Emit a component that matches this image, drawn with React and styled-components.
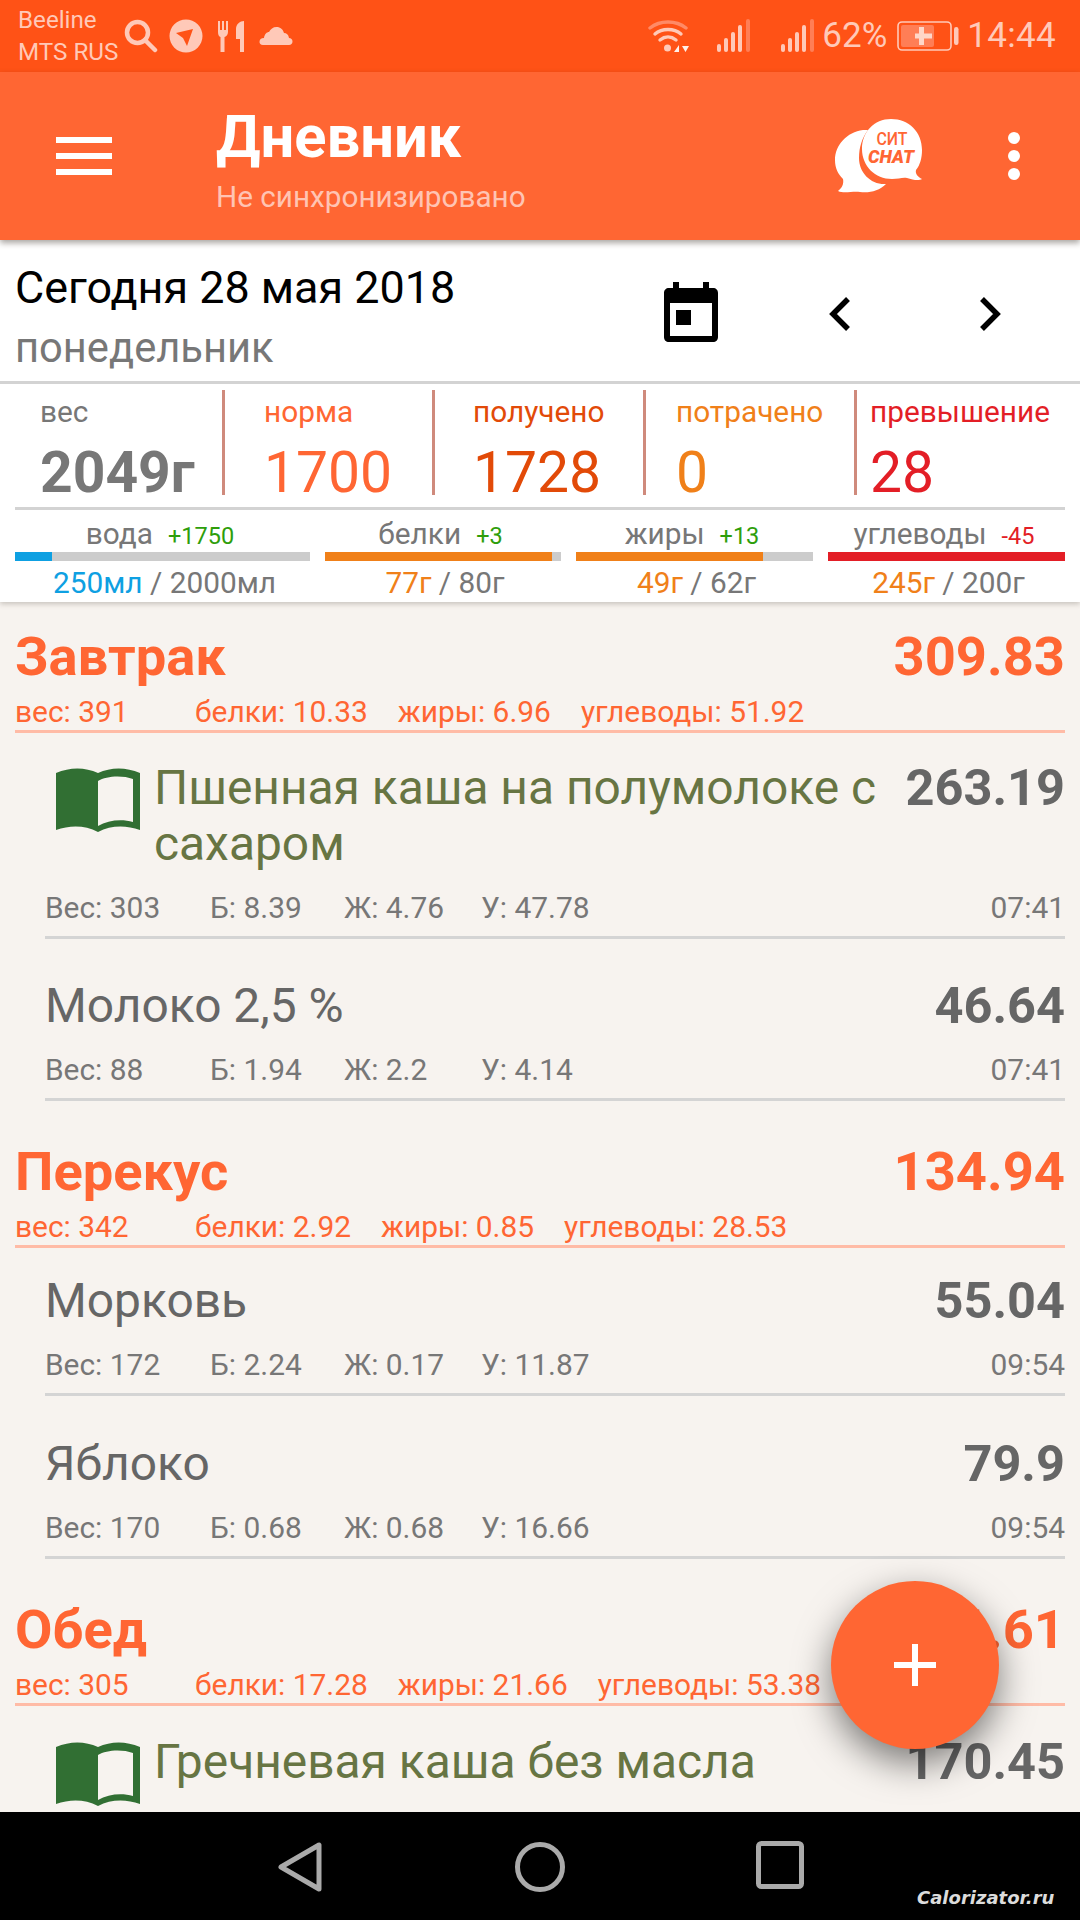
import React from "react";
import styled, { createGlobalStyle } from "styled-components";

const Global = createGlobalStyle`
  html, body { margin: 0; padding: 0; background: #000; }
  * { box-sizing: border-box; }
`;

const Screen = styled.div`
  position: relative;
  width: 1080px;
  height: 1920px;
  overflow: hidden;
  display: flex;
  flex-direction: column;
  background: #f7f3ef;
  font-family: Roboto, "Noto Sans", sans-serif;
`;

/* Status bar */
const StatusBar = styled.div`
  flex: none;
  height: 72px;
  background: #ff5216;
  color: #ffc9b8;
  display: flex;
  align-items: center;
  justify-content: space-between;
  padding: 0 24px 0 18px;
`;
const StatusGroup = styled.div`
  display: flex;
  align-items: center;
`;
const Carrier = styled.div`
  width: 106px;
  font-size: 24.2px;
  line-height: 32px;
  white-space: nowrap;
`;
const StatusIcon = styled.svg`
  display: block;
  flex: none;
  margin-left: ${(p) => p.$gap ?? 0}px;
`;
const BatteryText = styled.span`
  margin-left: 6px;
  font-size: 35px;
  line-height: 40px;
`;
const Clock = styled.span`
  margin-left: 8px;
  font-size: 35px;
  line-height: 44px;
  letter-spacing: 0.3px;
`;

/* App bar */
const AppBar = styled.header`
  position: relative;
  z-index: 3;
  flex: none;
  height: 168px;
  background: #ff6633;
  box-shadow: 0 3px 6px rgba(40, 30, 20, 0.4);
  display: flex;
  align-items: center;
  padding: 0 60px 0 56px;
`;
const Burger = styled.div`
  width: 56px;
  display: flex;
  flex-direction: column;
  gap: 10px;
`;
const BurgerLine = styled.span`
  display: block;
  height: 6px;
  background: #fff;
`;
const TitleBlock = styled.div`
  flex: 1;
  margin-left: 104px;
  padding-top: 8px;
`;
const Title = styled.div`
  color: #fff;
  font-size: 59.7px;
  font-weight: 700;
  line-height: 68px;
`;
const Subtitle = styled.div`
  color: #ffc4b3;
  font-size: 29.7px;
  line-height: 40px;
  margin-top: 6px;
`;
const Dots = styled.div`
  margin-left: 85px;
  display: flex;
  flex-direction: column;
  gap: 6px;
`;
const Dot = styled.span`
  width: 12px;
  height: 12px;
  border-radius: 50%;
  background: #fff;
`;

/* Date and daily summary */
const Summary = styled.section`
  position: relative;
  z-index: 2;
  flex: none;
  height: 362px;
  background: #fff;
  box-shadow: 0 2px 5px rgba(60, 50, 40, 0.25);
`;
const DateRow = styled.div`
  height: 144px;
  padding: 22px 0 0 15px;
  border-bottom: 3px solid #d3d3d3;
  display: flex;
`;
const DateText = styled.div`
  width: 649px;
`;
const DateLine = styled.div`
  color: #000;
  font-size: 44.9px;
  line-height: 52px;
`;
const Weekday = styled.div`
  color: #777;
  font-size: 41.7px;
  line-height: 48px;
  margin-top: 10px;
`;
const DateIcon = styled.svg`
  display: block;
  flex: none;
  margin: ${(p) => p.$top}px 0 0 ${(p) => p.$left}px;
`;
const Totals = styled.div`
  margin: 5px 15px 0;
  height: 121px;
  border-bottom: 3px solid #d3d3d3;
  display: grid;
  grid-template-columns: 207px 210px 211px 211px 1fr;
`;
const Total = styled.div`
  height: 105px;
  padding-left: ${(p) => p.$inset}px;
  margin-top: 1px;
  border-left: ${(p) => (p.$first ? "none" : "3px solid #cf8a7c")};
  color: ${(p) => p.$color};
  white-space: nowrap;
`;
const TotalLabel = styled.div`
  font-size: 29.8px;
  line-height: 34px;
  margin-top: 5px;
`;
const TotalValue = styled.div`
  font-size: 57px;
  line-height: 60px;
  font-weight: ${(p) => (p.$bold ? 700 : 400)};
  margin-top: 14px;
`;
const Macros = styled.div`
  margin: 0 15px;
  display: grid;
  grid-template-columns: 295px 236px 237px 237px;
  column-gap: 15px;
`;
const Macro = styled.div`
  text-align: center;
  white-space: nowrap;
`;
const MacroHead = styled.div`
  height: 42px;
  padding: 6px 5px 0 0;
  color: #777;
  font-size: 29.8px;
  line-height: 36px;
`;
const Delta = styled.span`
  margin-left: 15px;
  font-size: 23.5px;
  color: ${(p) => p.$color};
`;
const Track = styled.div`
  height: 9px;
  background: #cccccc;
`;
const Fill = styled.div`
  height: 100%;
  background: ${(p) => p.$color};
`;
const MacroAmount = styled.div`
  padding-left: 4px;
  color: #777;
  font-size: 29.8px;
  line-height: 36px;
  margin-top: 4px;
`;
const Eaten = styled.span`
  color: ${(p) => p.$color};
`;

/* Diary list */
const Diary = styled.main`
  flex: 1;
  min-height: 0;
  overflow: hidden;
`;
const MealHead = styled.div`
  margin: 0 15px;
  padding-top: ${(p) => p.$top}px;
  border-bottom: 3px solid #ffbba6;
  color: #ff6633;
`;
const MealTop = styled.div`
  display: flex;
  justify-content: space-between;
  font-size: 54.3px;
  font-weight: 700;
  line-height: 62px;
`;
const MealStats = styled.div`
  display: flex;
  gap: 30px;
  font-size: 29.9px;
  line-height: 34px;
  height: 35px;
  margin-top: 7px;
  white-space: nowrap;
`;
const MealWeight = styled.span`
  width: 150px;
`;
const Food = styled.div`
  margin: 0 15px 0 45px;
  padding-top: ${(p) => p.$top}px;
  border-bottom: ${(p) => (p.$open ? "none" : "3px solid #d4d4d4")};
`;
const FoodTop = styled.div`
  display: flex;
  align-items: flex-start;
  justify-content: space-between;
`;
const FoodName = styled.div`
  display: flex;
  align-items: flex-start;
`;
const FoodTitle = styled.div`
  font-size: 47.9px;
  line-height: 56px;
  color: ${(p) => (p.$recipe ? "#677543" : "#666")};
  white-space: nowrap;
`;
const Book = styled.svg`
  flex: none;
  display: block;
  margin: 8px 14px 0 11px;
`;
const FoodValue = styled.div`
  font-size: 50.5px;
  font-weight: 700;
  line-height: 55px;
  color: #666;
`;
const FoodStats = styled.div`
  display: grid;
  grid-template-columns: 165px 134px 137px 1fr auto;
  height: 45px;
  margin-top: 19px;
  color: #777;
  font-size: 29.9px;
  line-height: 34px;
`;

/* Add button */
const Fab = styled.div`
  position: absolute;
  left: 831px;
  top: 1581px;
  width: 168px;
  height: 168px;
  border-radius: 50%;
  background: #ff6633;
  box-shadow: 0 14px 36px rgba(0, 0, 0, 0.5);
  display: flex;
  align-items: center;
  justify-content: center;
  z-index: 5;
`;

/* Navigation bar */
const NavBar = styled.nav`
  position: relative;
  z-index: 6;
  flex: none;
  height: 108px;
  background: #000;
  display: flex;
  align-items: flex-start;
  padding: 29px 0 0 277px;
`;
const NavIcon = styled.svg`
  display: block;
  flex: none;
  margin-left: ${(p) => p.$gap ?? 0}px;
`;
const Watermark = styled.div`
  position: absolute;
  left: 917px;
  top: 75px;
  color: #dcdcdc;
  font-family: "DejaVu Sans", sans-serif;
  font-size: 18px;
  font-weight: 700;
  font-style: italic;
  line-height: 22px;
  white-space: nowrap;
`;

const SignalIcon = ({ gap }) => (
  <StatusIcon $gap={gap} width="36" height="36" viewBox="0 0 36 36">
    <g fill="currentColor">
      <rect x="1" y="26" width="4" height="8" rx="2" />
      <rect x="8" y="20" width="4" height="14" rx="2" />
      <rect x="15" y="14" width="4" height="20" rx="2" />
      <rect x="22" y="7" width="4" height="27" rx="2" />
    </g>
    <rect x="30" y="1" width="4" height="33" rx="2" fill="#ff7e56" />
  </StatusIcon>
);

const BookIcon = () => (
  <Book width="84" height="66" viewBox="0 0 84 66">
    <path
      fill="#316f33"
      fillRule="evenodd"
      d="M0 5C14 -1 29 -1 42 5C55 -1 70 -1 84 5V62C70 57 55 57 42 64C29 57 14 57 0 62ZM42 13V58C52 52 66 51 77 54V11C66 7 50 8 42 13Z"
    />
  </Book>
);

const Meal = ({ top, name, total, weight, protein, fat, carbs }) => (
  <MealHead $top={top}>
    <MealTop>
      <span>{name}</span>
      <span>{total}</span>
    </MealTop>
    <MealStats>
      <MealWeight>вес: {weight}</MealWeight>
      <span>белки: {protein}</span>
      <span>жиры: {fat}</span>
      <span>углеводы: {carbs}</span>
    </MealStats>
  </MealHead>
);

const FoodRow = ({ top, recipe, name, value, stats }) => (
  <Food $top={top} $open={!stats}>
    <FoodTop>
      <FoodName>
        {recipe && <BookIcon />}
        <FoodTitle $recipe={recipe}>{name}</FoodTitle>
      </FoodName>
      <FoodValue>{value}</FoodValue>
    </FoodTop>
    {stats && (
      <FoodStats>
        <span>Вес: {stats.weight}</span>
        <span>Б: {stats.b}</span>
        <span>Ж: {stats.f}</span>
        <span>У: {stats.c}</span>
        <span>{stats.time}</span>
      </FoodStats>
    )}
  </Food>
);

const totals = [
  { label: "вес", value: "2049г", color: "#777", inset: 25, bold: true, first: true },
  { label: "норма", value: "1700", color: "#ff6633", inset: 39 },
  { label: "получено", value: "1728", color: "#e24a08", inset: 38 },
  { label: "потрачено", value: "0", color: "#f08019", inset: 30 },
  { label: "превышение", value: "28", color: "#e31e26", inset: 13 },
];

const macros = [
  { name: "вода", delta: "+1750", deltaColor: "#2e9e0b", pct: 12.5, bar: "#0ea0e2", eaten: "250мл", eatenColor: "#0ea0e2", goal: "2000мл" },
  { name: "белки", delta: "+3", deltaColor: "#2e9e0b", pct: 96, bar: "#f08019", eaten: "77г", eatenColor: "#f08019", goal: "80г" },
  { name: "жиры", delta: "+13", deltaColor: "#2e9e0b", pct: 79, bar: "#f08019", eaten: "49г", eatenColor: "#f08019", goal: "62г" },
  { name: "углеводы", delta: "-45", deltaColor: "#e31e26", pct: 100, bar: "#e31e26", eaten: "245г", eatenColor: "#f08019", goal: "200г" },
];

export default function App() {
  return (
    <Screen>
      <Global />
      <StatusBar>
        <StatusGroup>
          <Carrier>
            Beeline
            <br />
            MTS RUS
          </Carrier>
          <StatusIcon width="34" height="34" viewBox="0 0 34 34">
            <circle cx="13.5" cy="13.5" r="10.5" fill="none" stroke="currentColor" strokeWidth="4.5" />
            <path d="M21 21L31 31" stroke="currentColor" strokeWidth="4.5" strokeLinecap="round" />
          </StatusIcon>
          <StatusIcon $gap={11} width="34" height="34" viewBox="0 0 34 34">
            <path
              fill="currentColor"
              fillRule="evenodd"
              d="M17 0.5A16.5 16.5 0 1 1 17 33.5A16.5 16.5 0 1 1 17 0.5ZM7 14L24 10L18 27L14 19Z"
            />
          </StatusIcon>
          <StatusIcon $gap={14} width="28" height="32" viewBox="0 0 28 32">
            <path
              fill="currentColor"
              d="M1 1H3V10H5V1H7V10H9V1H11V12C11 15 9 16.5 7.5 17V32H3.5V17C2 16.5 1 15 1 12ZM27 1V32H23V19H19V9C19 4 23 1 27 1Z"
            />
          </StatusIcon>
          <StatusIcon $gap={14} width="34" height="20" viewBox="0 0 34 20">
            <path
              fill="currentColor"
              d="M4 19C1.5 19 0.5 17.5 0.5 16C0.5 13.5 2 12 5 12C5.5 8 8 6 10 6C11.5 3 14 1 17.5 1C21.5 1 24 3.5 25 7C27.5 7 29.5 8.5 30 12C32 12 33.5 13.5 33.5 15.5C33.5 17.5 32 19 30 19Z"
            />
          </StatusIcon>
        </StatusGroup>
        <StatusGroup>
          <StatusIcon width="42" height="34" viewBox="0 0 42 34">
            <g fill="none" strokeLinecap="round" strokeWidth="3.4">
              <path stroke="#ff8a66" d="M2 9C12 1 28 1 38 9" />
              <path stroke="currentColor" d="M7 15C14 9 26 9 33 15" />
              <path stroke="currentColor" d="M12 21C17 17 23 17 28 21" />
            </g>
            <circle cx="19.5" cy="29" r="3.5" fill="currentColor" />
            <path fill="#fff0ea" d="M26 33L31 26V33ZM34 27H41L37.5 33Z" />
          </StatusIcon>
          <SignalIcon gap={26} />
          <SignalIcon gap={28} />
          <BatteryText>62%</BatteryText>
          <StatusIcon $gap={10} width="62" height="30" viewBox="0 0 62 30">
            <rect x="1" y="1" width="53" height="28" rx="4" fill="none" stroke="currentColor" strokeWidth="1.6" />
            <rect x="4" y="4" width="33" height="22" rx="2" fill="#ff7e56" />
            <path fill="#ffd6c8" d="M22 6H27V12.5H35V17.5H27V24H22V17.5H18V12.5H22Z" />
            <rect x="57" y="6" width="4.5" height="18" rx="2.2" fill="currentColor" />
          </StatusIcon>
          <Clock>14:44</Clock>
        </StatusGroup>
      </StatusBar>

      <AppBar>
        <Burger>
          <BurgerLine />
          <BurgerLine />
          <BurgerLine />
        </Burger>
        <TitleBlock>
          <Title>Дневник</Title>
          <Subtitle>Не синхронизировано</Subtitle>
        </TitleBlock>
        <svg width="88" height="76" viewBox="0 0 88 76">
          <path
            fill="#fff"
            d="M28 12C12 14 0 27 0 42C0 50 3 56 8 61C9 66 7 70 3 73C9 76 17 73 25 74C35 75 44 73 51 66C36 67 24 55 24 40C24 29 27 20 33 12Z"
          />
          <path
            fill="#fff"
            d="M56 1C39 1 27 14 27 31C27 48 40 61 57 61C63 61 68 59 72 60C78 62 84 63 87 61C83 59 80 56 81 52C85 47 87 40 87 32C87 14 74 1 56 1Z"
          />
          <text x="57" y="27" textAnchor="middle" fontFamily="Roboto, sans-serif" fontSize="18.5" fontWeight="500" fill="#ff6633" textLength="31" lengthAdjust="spacingAndGlyphs">СИТ</text>
          <text x="56" y="45" textAnchor="middle" fontFamily="Roboto, sans-serif" fontSize="18.5" fontWeight="900" fontStyle="italic" fill="#ff6633" textLength="46" lengthAdjust="spacingAndGlyphs">CHAT</text>
        </svg>
        <Dots>
          <Dot />
          <Dot />
          <Dot />
        </Dots>
      </AppBar>

      <Summary>
        <DateRow>
          <DateText>
            <DateLine>Сегодня 28 мая 2018</DateLine>
            <Weekday>понедельник</Weekday>
          </DateText>
          <DateIcon $top={20} $left={0} width="54" height="60" viewBox="0 0 54 60">
            <path
              fillRule="evenodd"
              d="M9 0H15V6H39V0H45V6H49C52 6 54 8 54 11V55C54 58 52 60 49 60H5C2 60 0 58 0 55V11C0 8 2 6 5 6H9ZM6 21V54H48V21ZM12 28H27V43H12Z"
            />
          </DateIcon>
          <DateIcon $top={34} $left={111} width="22" height="36" viewBox="0 0 22 36">
            <path d="M19 3L4 18L19 33" fill="none" stroke="#000" strokeWidth="5.5" />
          </DateIcon>
          <DateIcon $top={34} $left={128} width="22" height="36" viewBox="0 0 22 36">
            <path d="M3 3L18 18L3 33" fill="none" stroke="#000" strokeWidth="5.5" />
          </DateIcon>
        </DateRow>
        <Totals>
          {totals.map((t) => (
            <Total key={t.label} $color={t.color} $inset={t.inset} $first={t.first}>
              <TotalLabel>{t.label}</TotalLabel>
              <TotalValue $bold={t.bold}>{t.value}</TotalValue>
            </Total>
          ))}
        </Totals>
        <Macros>
          {macros.map((m) => (
            <Macro key={m.name}>
              <MacroHead>
                {m.name}
                <Delta $color={m.deltaColor}>{m.delta}</Delta>
              </MacroHead>
              <Track>
                <Fill $color={m.bar} style={{ width: `${m.pct}%` }} />
              </Track>
              <MacroAmount>
                <Eaten $color={m.eatenColor}>{m.eaten}</Eaten> / {m.goal}
              </MacroAmount>
            </Macro>
          ))}
        </Macros>
      </Summary>

      <Diary>
        <Meal top={24} name="Завтрак" total="309.83" weight="391" protein="10.33" fat="6.96" carbs="51.92" />
        <FoodRow
          top={27}
          recipe
          name={<>Пшенная каша на полумолоке с<br />сахаром</>}
          value="263.19"
          stats={{ weight: "303", b: "8.39", f: "4.76", c: "47.78", time: "07:41" }}
        />
        <FoodRow top={39} name="Молоко 2,5 %" value="46.64" stats={{ weight: "88", b: "1.94", f: "2.2", c: "4.14", time: "07:41" }} />
        <Meal top={40} name="Перекус" total="134.94" weight="342" protein="2.92" fat="0.85" carbs="28.53" />
        <FoodRow top={25} name="Морковь" value="55.04" stats={{ weight: "172", b: "2.24", f: "0.17", c: "11.87", time: "09:54" }} />
        <FoodRow top={40} name="Яблоко" value="79.9" stats={{ weight: "170", b: "0.68", f: "0.68", c: "16.66", time: "09:54" }} />
        <Meal top={40} name="Обед" total="346.61" weight="305" protein="17.28" fat="21.66" carbs="53.38" />
        <FoodRow top={28} recipe name="Гречневая каша без масла" value="170.45" />
      </Diary>

      <Fab>
        <svg width="42" height="42" viewBox="0 0 42 42">
          <path d="M18 0H24V18H42V24H24V42H18V24H0V18H18Z" fill="#fff" />
        </svg>
      </Fab>

      <NavBar>
        <NavIcon width="46" height="52" viewBox="0 0 46 52">
          <path d="M42 4V48L4 26Z" fill="none" stroke="#aaa" strokeWidth="5" strokeLinejoin="round" />
        </NavIcon>
        <NavIcon $gap={191} width="52" height="52" viewBox="0 0 52 52">
          <circle cx="26" cy="26" r="22.5" fill="none" stroke="#aaa" strokeWidth="5" />
        </NavIcon>
        <NavIcon $gap={190} width="48" height="48" viewBox="0 0 48 48">
          <rect x="2.5" y="2.5" width="43" height="43" rx="3" fill="none" stroke="#aaa" strokeWidth="5" />
        </NavIcon>
        <Watermark>Calorizator.ru</Watermark>
      </NavBar>
    </Screen>
  );
}
